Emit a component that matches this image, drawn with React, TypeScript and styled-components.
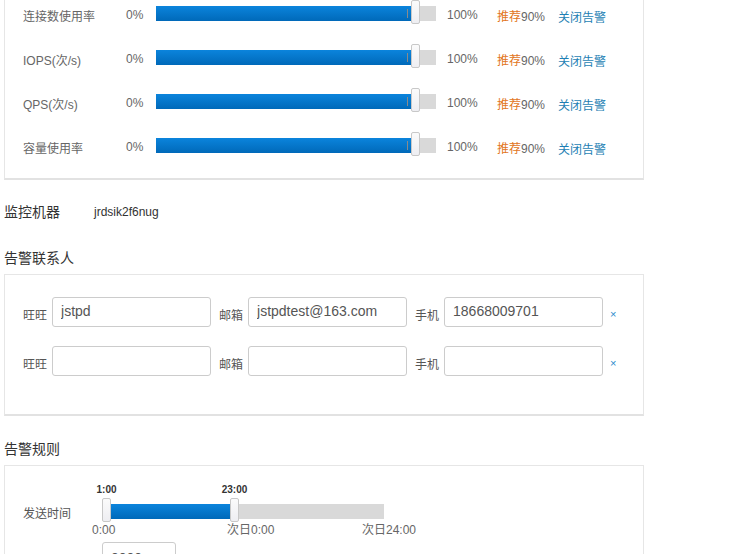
import React from 'react';
import styled, {createGlobalStyle} from 'styled-components';

const GlobalStyle = createGlobalStyle`
  body {
    margin: 0;
    background: #fff;
    font-family: "Liberation Sans", Arial, "Noto Sans CJK SC", sans-serif;
    color: #555;
    overflow: hidden;
  }
`;

type Metric = {
  label: string,
};

const metrics: Metric[] = [
  {label: '连接数使用率'},
  {label: 'IOPS(次/s)'},
  {label: 'QPS(次/s)'},
  {label: '容量使用率'},
];

type Contact = {
  wangwang: string,
  email: string,
  phone: string,
};

const contacts: Contact[] = [
  {wangwang: 'jstpd', email: 'jstpdtest@163.com', phone: '18668009701'},
  {wangwang: '', email: '', phone: ''},
];

const ThresholdSlider = ({value}: {value: number}) => {
  const width = 280;
  const pos = Math.round(width * value / 100) - 25;
  return (
    <Track $width={width}>
      <Fill style={{left: 0, width: pos + 1}}/>
      <Tick style={{left: pos - 4}}/>
      <Handle style={{left: pos}}/>
    </Track>
  );
};

const TimeSlider = ({from, to}: {from: number, to: number}) => {
  const width = 282;
  const handleW = 9;
  const pxPerHour = 128 / 22;
  const a = Math.round((from - 1) * pxPerHour);
  const b = Math.round((to - 1) * pxPerHour);
  return (
    <SliderBlock>
      <HandleLabels>
        <HandleLabel style={{left: 10 + a + handleW / 2}}>{from}:00</HandleLabel>
        <HandleLabel style={{left: 10 + b + handleW / 2}}>{to}:00</HandleLabel>
      </HandleLabels>
      <TimeTrack $width={width}>
        <Fill style={{left: a + handleW, width: b - a - handleW + 1}}/>
        <Handle style={{left: a}}/>
        <Handle style={{left: b}}/>
      </TimeTrack>
      <Scale>
        <ScaleMark>0:00</ScaleMark>
        <ScaleMark>次日0:00</ScaleMark>
        <ScaleMark>次日24:00</ScaleMark>
      </Scale>
    </SliderBlock>
  );
};

const App = () => {
  return (
    <Page>
      <GlobalStyle/>
      <TopPanel>
        {metrics.map(m => (
          <MetricRow key={m.label}>
            <MetricLabel>{m.label}</MetricLabel>
            <Percent>0%</Percent>
            <ThresholdSlider value={100}/>
            <MaxText>100%</MaxText>
            <Recommend><em>推荐</em>90%</Recommend>
            <Link href="#">关闭告警</Link>
          </MetricRow>
        ))}
      </TopPanel>

      <MachineRow>
        <SectionTitle>监控机器</SectionTitle>
        <MachineName>jrdsik2f6nug</MachineName>
      </MachineRow>

      <SectionTitle>告警联系人</SectionTitle>
      <ContactPanel>
        {contacts.map((c, i) => (
          <ContactRow key={i}>
            <FieldLabel>旺旺</FieldLabel>
            <TextInput readOnly value={c.wangwang}/>
            <FieldLabel>邮箱</FieldLabel>
            <TextInput readOnly value={c.email}/>
            <FieldLabel>手机</FieldLabel>
            <TextInput readOnly value={c.phone}/>
            <Remove>×</Remove>
          </ContactRow>
        ))}
      </ContactPanel>

      <SectionTitle $spaced>告警规则</SectionTitle>
      <RulePanel>
        <RuleRow>
          <RuleLabel>发送时间</RuleLabel>
          <TimeSlider from={1} to={23}/>
        </RuleRow>
        <SmallInput readOnly value="0000"/>
      </RulePanel>
    </Page>
  );
};

const Page = styled.div`
  padding-left: 4px;
  width: 640px;
`;

const Panel = styled.div`
  box-sizing: border-box;
  width: 640px;
  border: 1px solid #e6e6e6;
  border-bottom: 2px solid #e2e2e2;
  background: #fff;
`;

const TopPanel = styled(Panel)`
  margin-top: -8px;
  padding: 0 0 9px 18px;
`;

const MetricRow = styled.div`
  display: flex;
  align-items: center;
  height: 44px;
  font-size: 12px;
  color: #666;
`;

const MetricLabel = styled.div`
  width: 103px;
  padding-top: 1px;
  font-size: 12px;
  color: #666;
`;

const Percent = styled.div`
  width: 30px;
`;

const Track = styled.div<{$width: number}>`
  position: relative;
  flex-shrink: 0;
  width: ${p => p.$width}px;
  height: 15px;
  margin-top: -3px;
  background: #d9d9d9;
`;

const TimeTrack = styled(Track)`
  margin: 8px 0 0 10px;
`;

const Fill = styled.div`
  position: absolute;
  top: 0;
  bottom: 0;
  background: linear-gradient(#0b84dc, #0069b9);
`;

const Tick = styled.div`
  position: absolute;
  z-index: 1;
  top: 3px;
  width: 1px;
  height: 9px;
  background: #8a8a8a;
`;

const Handle = styled.div`
  position: absolute;
  z-index: 2;
  top: -6px;
  box-sizing: border-box;
  width: 9px;
  height: 24px;
  border: 1px solid #c8c8c8;
  border-radius: 2px;
  background: linear-gradient(#fbfbfb, #eeeef2);
`;

const MaxText = styled.div`
  width: 50px;
  margin-left: 11px;
`;

const Recommend = styled.div`
  width: 61px;
  em {
    font-style: normal;
    color: #e2761c;
  }
`;

const Link = styled.a`
  padding-top: 2px;
  color: #1e7fb4;
  text-decoration: none;
`;

const MachineRow = styled.div`
  display: flex;
  align-items: center;
  margin: 22px 0 26px;
  height: 20px;
`;

const SectionTitle = styled.div<{$spaced?: boolean}>`
  height: 20px;
  line-height: 20px;
  font-size: 14px;
  color: #333;
  margin-top: ${p => (p.$spaced ? '23px' : '0')};
  margin-bottom: 6px;
  ${MachineRow} & {
    margin: 0;
    width: 90px;
  }
`;

const MachineName = styled.div`
  font-size: 12px;
  color: #333;
`;

const ContactPanel = styled(Panel)`
  padding: 22px 0 38px 18px;
  display: flex;
  flex-direction: column;
  gap: 19px;
`;

const ContactRow = styled.div`
  display: flex;
  align-items: center;
`;

const FieldLabel = styled.span`
  font-size: 12px;
  color: #555;
  padding-top: 4px;
  margin-right: 5px;
`;

const TextInput = styled.input`
  box-sizing: border-box;
  width: 159px;
  height: 30px;
  margin: 0 8px 0 0;
  padding: 0 0 3px 8px;
  border: 1px solid #ccc;
  border-radius: 3px;
  font-family: "Liberation Sans", Arial, sans-serif;
  font-size: 14px;
  color: #555;
  outline: none;
`;

const Remove = styled.span`
  margin-left: -1px;
  padding-top: 3px;
  font-size: 11px;
  color: #2b8ccc;
`;

const RulePanel = styled(Panel)`
  padding: 18px 0 20px 18px;
  height: 120px;
`;

const RuleRow = styled.div`
  display: flex;
  align-items: center;
`;

const RuleLabel = styled.div`
  width: 69px;
  padding-top: 4px;
  font-size: 12px;
  color: #555;
`;

const SliderBlock = styled.div`
  width: 420px;
`;

const HandleLabels = styled.div`
  position: relative;
  height: 12px;
`;

const HandleLabel = styled.span`
  position: absolute;
  top: 0;
  transform: translateX(-50%);
  font-size: 10px;
  line-height: 12px;
  font-weight: bold;
  color: #333;
  white-space: nowrap;
`;

const Scale = styled.div`
  display: flex;
  margin-top: 4px;
  height: 14px;
`;

const ScaleMark = styled.span`
  flex-shrink: 0;
  width: 135px;
  font-size: 12px;
  line-height: 14px;
  color: #666;
`;

const SmallInput = styled(TextInput)`
  width: 74px;
  margin: 5px 0 0 79px;
  padding-top: 4px;
`;

export default App;
